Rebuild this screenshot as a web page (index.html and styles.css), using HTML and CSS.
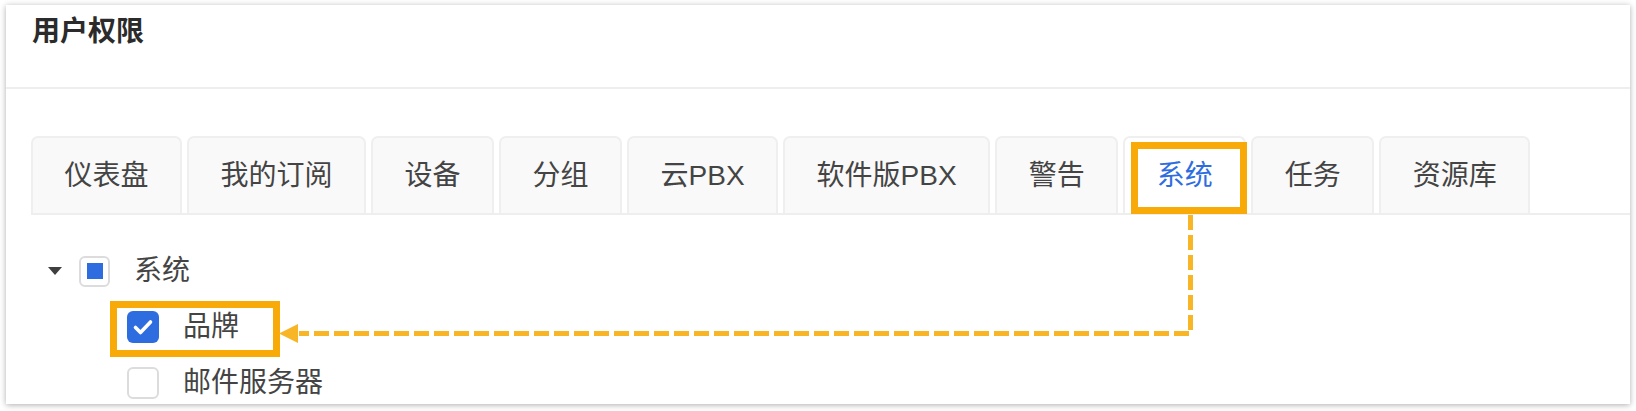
FILE: index.html
```html
<!DOCTYPE html>
<html lang="zh-CN">
<head>
<meta charset="utf-8">
<title>用户权限</title>
<link rel="stylesheet" href="styles.css">
</head>
<body>
<div class="card">
  <div class="card-header">
    <h2 class="card-title">用户权限</h2>
  </div>
  <div class="tabs">
    <div class="tab">仪表盘</div>
    <div class="tab">我的订阅</div>
    <div class="tab">设备</div>
    <div class="tab">分组</div>
    <div class="tab">云PBX</div>
    <div class="tab">软件版PBX</div>
    <div class="tab">警告</div>
    <div class="tab tab-active">系统</div>
    <div class="tab">任务</div>
    <div class="tab">资源库</div>
  </div>
  <div class="tree">
    <div class="tree-row">
      <svg class="caret" width="14" height="8" viewBox="0 0 14 8"><path d="M0 0H14L7 8Z" fill="#3f3f3f"/></svg>
      <span class="check check-partial"><span class="check-dot"></span></span>
      <span class="tree-label">系统</span>
    </div>
    <div class="tree-children">
      <div class="tree-row">
        <span class="check check-on">
          <svg width="32" height="32" viewBox="0 0 32 32"><polyline points="8.5,16.5 13.5,21.5 23.5,11" fill="none" stroke="#fff" stroke-width="3.6" stroke-linecap="round" stroke-linejoin="round"/></svg>
        </span>
        <span class="tree-label">品牌</span>
      </div>
      <div class="tree-row">
        <span class="check"></span>
        <span class="tree-label">邮件服务器</span>
      </div>
    </div>
  </div>
</div>
<svg class="annotation" width="1636" height="411" viewBox="0 0 1636 411">
  <rect x="1134.5" y="145.5" width="109" height="65" fill="none" stroke="#f8ab08" stroke-width="7"/>
  <rect x="113.5" y="304.5" width="163" height="49" fill="none" stroke="#f8ab08" stroke-width="7"/>
  <path d="M1190.5 215 V333.5 H299" fill="none" stroke="#f8b526" stroke-width="5" stroke-dasharray="15 5"/>
  <polygon points="279,333.5 298,324 298,343" fill="#f8b526"/>
</svg>
</body>
</html>
```
FILE: styles.css
```css
html, body {
  margin: 0;
  padding: 0;
  background: #ffffff;
}

body {
  position: relative;
  width: 1636px;
  height: 411px;
  overflow: hidden;
  font-family: "Liberation Sans", "Noto Sans CJK SC", sans-serif;
  color: #424242;
}

.card {
  margin: 5px 6px 0 6px;
  width: 1624px;
  height: 399px;
  background: #ffffff;
  box-shadow: 0 1px 6px rgba(0, 0, 0, 0.32);
  overflow: hidden;
}

.card-header {
  box-sizing: border-box;
  height: 84px;
  padding: 13px 0 0 26px;
  border-bottom: 2px solid #eeeeee;
}

.card-title {
  margin: 0;
  font-size: 28px;
  line-height: 28px;
  font-weight: 700;
  color: #2b2b2b;
}

.tabs {
  display: flex;
  gap: 5px;
  margin: 47px 0 0 25px;
  border-bottom: 2px solid #eeeeee;
}

.tab {
  box-sizing: border-box;
  height: 77px;
  display: flex;
  align-items: center;
  padding: 0 31.5px;
  border: 2px solid #efefef;
  border-bottom: none;
  border-radius: 7px 7px 0 0;
  background: #f9f9f9;
  font-size: 28px;
  line-height: 28px;
  color: #444444;
  white-space: nowrap;
}

.tab-active {
  background: #ffffff;
  color: #2e6ddf;
}

.tree {
  padding: 28px 0 0 42px;
}

.tree-row {
  display: flex;
  align-items: center;
  height: 56px;
}

.caret {
  flex: none;
  margin-right: 17px;
}

.tree-children {
  margin-left: 79px;
}

.check {
  box-sizing: border-box;
  flex: none;
  width: 32px;
  height: 32px;
  border: 2px solid #dcdcdc;
  border-radius: 6px;
  background: #ffffff;
  display: flex;
  align-items: center;
  justify-content: center;
}

.check-partial {
  width: 31px;
  height: 31px;
}

.check-dot {
  width: 16px;
  height: 16px;
  background: #2e6ddf;
}

.check-on {
  border: none;
  background: #2e6ddf;
}

.check-on svg {
  display: block;
}

.tree-label {
  margin-left: 24px;
  font-size: 28px;
  line-height: 28px;
  color: #444444;
}

.annotation {
  position: absolute;
  left: 0;
  top: 0;
  pointer-events: none;
}
```
